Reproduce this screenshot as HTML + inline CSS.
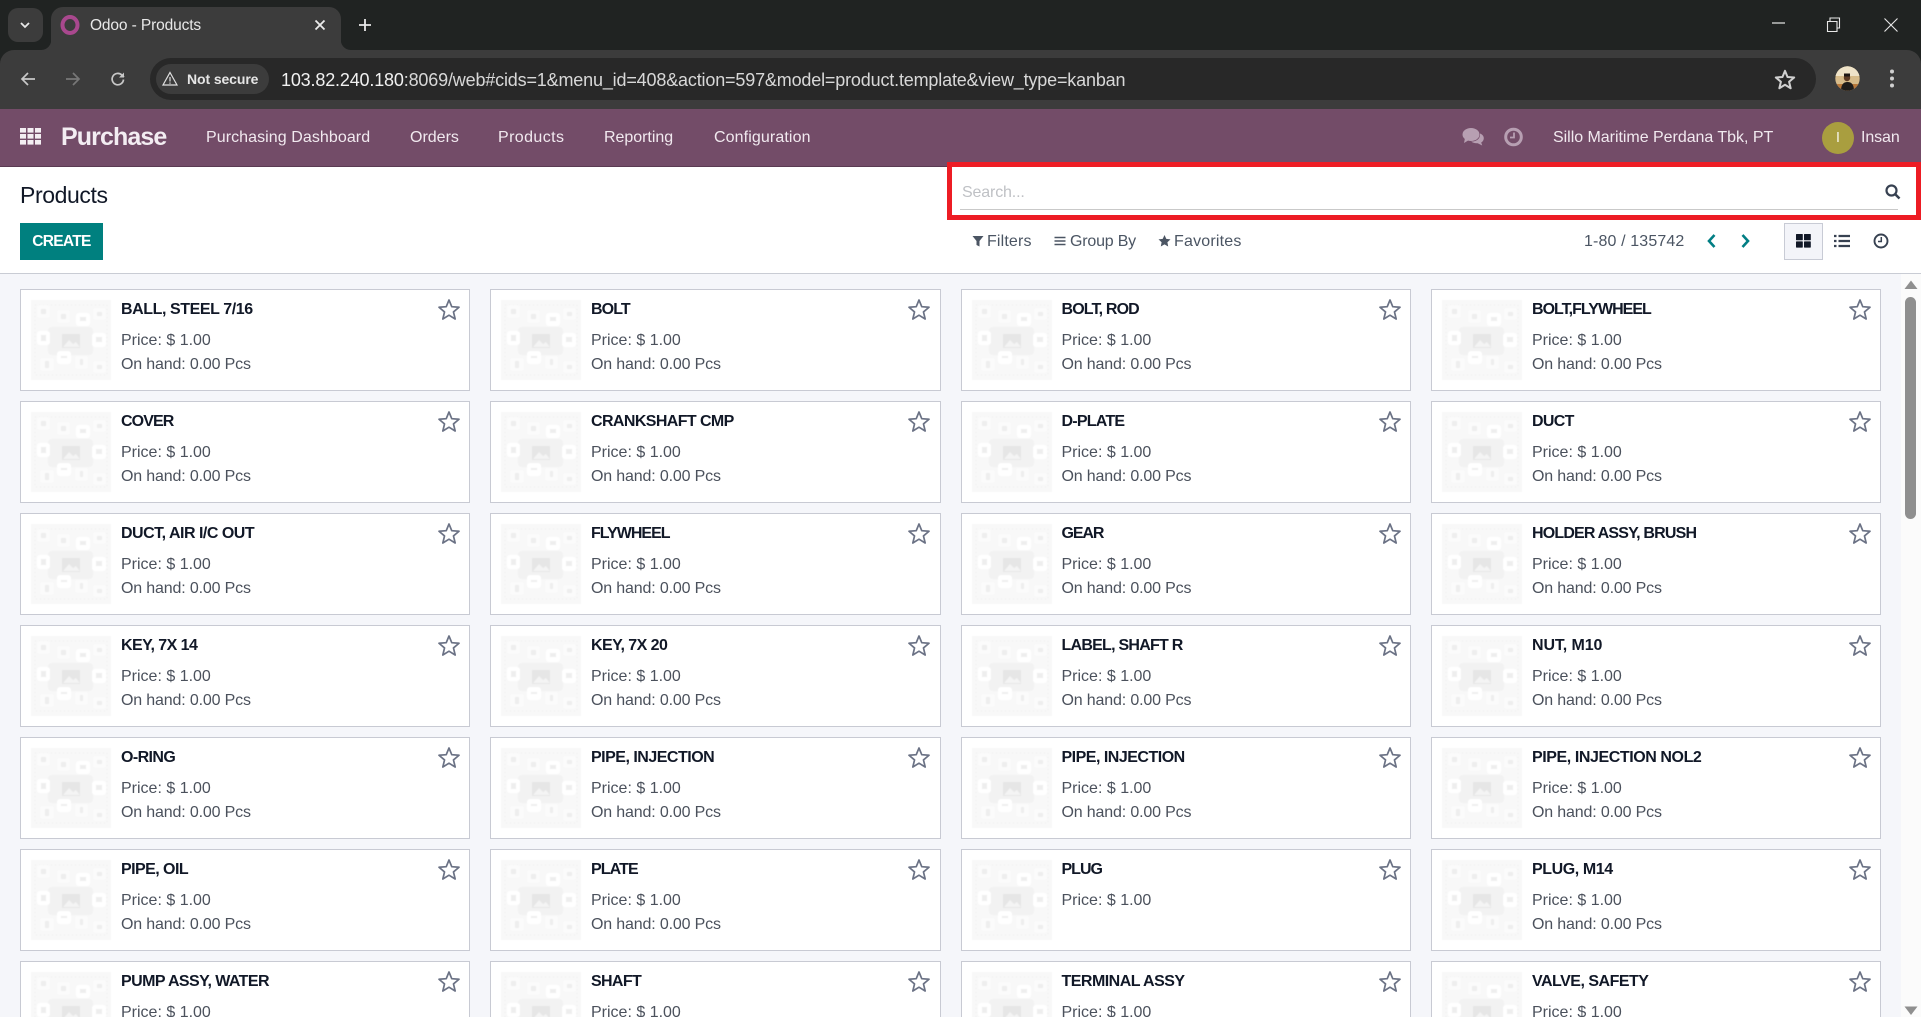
<!DOCTYPE html>
<html lang="en"><head><meta charset="utf-8"><title>Odoo - Products</title>
<style>
html,body{margin:0;padding:0;width:1921px;height:1017px;overflow:hidden;background:#fff}
body{position:relative;font-family:"Liberation Sans",sans-serif}
.a{position:absolute;white-space:nowrap}
svg{position:absolute;overflow:visible}
.nav{top:129px;font-size:16px;line-height:18px;color:#f1e9ef}
.ctl{top:233px;font-size:16px;line-height:18px;color:#4b5563}
#list{position:absolute;left:0;top:274px;width:1901px;height:743px;background:#f5f6fa;overflow:hidden}
.card{position:absolute;width:448px;height:100px;background:#fff;border:1px solid #c8cad3}
.c2{left:490px;width:449px}
.card .im{position:absolute;left:10px;top:10px;width:80px;height:80px;filter:blur(.5px)}
.card b{position:absolute;left:100px;top:11px;font-size:16px;line-height:18px;letter-spacing:-.42px;color:#111827;white-space:nowrap}
.card i{position:absolute;font-style:normal;left:100px;font-size:16px;line-height:18px;color:#4b515c;white-space:nowrap}
.card .p{top:42px;letter-spacing:0}
.card .h{top:66px;letter-spacing:-.16px}
.card .s{left:416px;top:8px;width:24px;height:24px}
</style></head><body>
<svg width="0" height="0" style="position:absolute">
<defs>
<symbol id="ph" viewBox="0 0 80 80">
<rect width="80" height="80" fill="#f8f8f8"/>
<rect x="4" y="5" width="72" height="70" fill="none" stroke="#eeeeee" stroke-dasharray="1 3"/>
<rect x="17" y="27" width="45" height="28" rx="4" fill="#f2f2f2"/>
<path d="M31 34h18v14H31z" fill="#e6e6e6"/><path d="M32 47l6-7 4 4 3-2 4 5z" fill="#f4f4f4"/>
<g fill="#fbfbfb"><rect x="6" y="5" width="13" height="13" rx="3"/><rect x="26" y="10" width="13" height="13" rx="3"/><rect x="45" y="13" width="14" height="13" rx="3" fill="#fff"/><rect x="62" y="8" width="13" height="12" rx="3"/><rect x="6" y="31" width="13" height="14" rx="3" fill="#fff"/><rect x="61" y="33" width="14" height="14" rx="3" fill="#fff"/><rect x="9" y="58" width="14" height="13" rx="3"/><rect x="26" y="51" width="14" height="13" rx="3" fill="#fff"/><rect x="44" y="56" width="13" height="13" rx="3"/><rect x="62" y="61" width="13" height="12" rx="3"/></g>
<g fill="#eeeeee"><rect x="10" y="9" width="5" height="5"/><rect x="30" y="14" width="5" height="5"/><rect x="49" y="17" width="6" height="4"/><rect x="66" y="12" width="5" height="4"/><rect x="10" y="35" width="5" height="6"/><rect x="65" y="37" width="6" height="5"/><rect x="14" y="61" width="4" height="7"/><rect x="30" y="56" width="6" height="2"/><rect x="49" y="59" width="3" height="6"/><rect x="66" y="65" width="5" height="4"/></g>
</symbol>
<symbol id="st" viewBox="0 0 24 24"><path d="M12 2l2.760 6.700 7.240.56-5.530 4.690 1.700 7.050L12 17.200 5.830 21l1.700-7.050L2 9.260l7.240-.56z" fill="none" stroke="#6b7285" stroke-width="1.700" stroke-linejoin="round"/></symbol>
<symbol id="stw" viewBox="0 0 24 24"><path d="M12 2l2.760 6.700 7.240.56-5.530 4.690 1.700 7.050L12 17.200 5.830 21l1.700-7.050L2 9.260l7.240-.56z" fill="none" stroke="#d0d0d0" stroke-width="2.200" stroke-linejoin="round"/></symbol>
</defs></svg>

<!-- browser chrome -->
<div class="a" style="left:0;top:0;width:1921px;height:66px;background:#202322"></div>
<div class="a" style="left:0;top:50px;width:1921px;height:59px;background:#3c3c3c;border-radius:14px 14px 0 0"></div>
<div class="a" style="left:8px;top:8px;width:35px;height:34px;background:#3c3c3c;border-radius:10px"></div>
<svg style="left:18px;top:19px" width="14" height="12"><path d="M3 4l4 4 4-4" fill="none" stroke="#e8e8e8" stroke-width="1.800"/></svg>
<div class="a" style="left:51px;top:7px;width:290px;height:43px;background:#3c3c3c;border-radius:12px 12px 0 0"></div>
<svg style="left:41px;top:38px" width="310" height="12"><path d="M10 0v12H0a10 10 0 0 0 10-12zM300 0v12h10a10 10 0 0 1-10-12z" fill="#3c3c3c"/></svg>
<svg style="left:60px;top:15px" width="20" height="20"><ellipse cx="10" cy="10" rx="7.500" ry="8" fill="none" stroke="#a9488e" stroke-width="4"/></svg>
<div class="a" style="left:90px;top:17px;font-size:15.500px;line-height:18px;color:#e8e8e8;letter-spacing:-.12px">Odoo - Products</div>
<svg style="left:313px;top:18px" width="14" height="14"><path d="M2.500 2.500l9 9m0-9l-9 9" stroke="#ececec" stroke-width="1.800"/></svg>
<svg style="left:358px;top:18px" width="14" height="14"><path d="M7 1v12M1 7h12" stroke="#e8e8e8" stroke-width="1.800"/></svg>
<svg style="left:1772px;top:18px" width="14" height="10"><path d="M0 5h13" stroke="#e8e8e8" stroke-width="1.200"/></svg>
<svg style="left:1827px;top:17px" width="14" height="15"><path d="M.5 4.500h9.500v10H.5zM3 4V1h9.500v10H10.500" fill="none" stroke="#e8e8e8" stroke-width="1.100"/></svg>
<svg style="left:1884px;top:18px" width="14" height="14"><path d="M.5.5l13 13m0-13l-13 13" stroke="#e8e8e8" stroke-width="1.100"/></svg>

<svg style="left:20px;top:71px" width="16" height="16"><path d="M15 8H2M8 2L2 8l6 6" fill="none" stroke="#c8c8c8" stroke-width="1.700"/></svg>
<svg style="left:65px;top:71px" width="16" height="16"><path d="M1 8h13M8 2l6 6-6 6" fill="none" stroke="#777" stroke-width="1.700"/></svg>
<svg style="left:110px;top:71px" width="16" height="16"><path d="M13.500 8.500A5.700 5.700 0 1 1 11.800 4L14 6" fill="none" stroke="#c8c8c8" stroke-width="1.700"/><path d="M14 1.500V6.500H9z" fill="#c8c8c8"/></svg>
<div class="a" style="left:150px;top:58px;width:1666px;height:42px;background:#282828;border-radius:21px"></div>
<div class="a" style="left:156px;top:64px;width:113px;height:30px;background:#3c3c3c;border-radius:15px"></div>
<svg style="left:162px;top:71px" width="16" height="16"><path d="M8 1.500L15 14H1zM8 6v4.500M8 11.500v1.300" fill="none" stroke="#e0e0e0" stroke-width="1.200"/></svg>
<div class="a" style="left:187px;top:71px;font-size:14px;line-height:16px;font-weight:bold;color:#e6e6e6;letter-spacing:-.1px">Not secure</div>
<div class="a" style="left:281px;top:70px;font-size:18px;line-height:20px;letter-spacing:-.17px;color:#d8d8d8"><span style="color:#f1f1f1">103.82.240.180</span>:8069/web#cids=1&amp;menu_id=408&amp;action=597&amp;model=product.template&amp;view_type=kanban</div>
<svg style="left:1774px;top:69px" width="22" height="22"><use href="#stw" width="22" height="22"/></svg>
<svg style="left:1835px;top:66px" width="25" height="25"><defs><clipPath id="cav"><circle cx="12.500" cy="12.500" r="12.200"/></clipPath></defs><g clip-path="url(#cav)"><rect width="25" height="25" fill="#d8bc8a"/><rect y="0" width="25" height="10" fill="#efe3c8"/><rect y="18" width="25" height="7" fill="#b8783a"/><path d="M6 25c0-7 3-9 6.500-9s6.500 2 6.500 9z" fill="#1e1c1a"/><circle cx="12" cy="12" r="3.200" fill="#5c3a24"/><rect x="9" y="7.500" width="6" height="3" fill="#1e1613"/></g></svg>
<svg style="left:1888px;top:68px" width="8" height="22"><circle cx="4" cy="3.500" r="2" fill="#d0d0d0"/><circle cx="4" cy="10.500" r="2" fill="#d0d0d0"/><circle cx="4" cy="17.500" r="2" fill="#d0d0d0"/></svg>

<!-- odoo navbar -->
<div class="a" style="left:0;top:109px;width:1921px;height:57px;background:#734c68;border-bottom:1px solid #5a3a52"></div>
<svg style="left:20px;top:128px" width="22" height="17"><g fill="#f3eef2"><rect width="6" height="4.600"/><rect x="7.500" width="6" height="4.600"/><rect x="15" width="6" height="4.600"/><rect y="6" width="6" height="4.600"/><rect x="7.500" y="6" width="6" height="4.600"/><rect x="15" y="6" width="6" height="4.600"/><rect y="12" width="6" height="4.600"/><rect x="7.500" y="12" width="6" height="4.600"/><rect x="15" y="12" width="6" height="4.600"/></g></svg>
<div class="a" style="left:61px;top:122px;font-size:25px;line-height:30px;font-weight:bold;color:#f3edf2;letter-spacing:-.9px">Purchase</div>
<div class="a nav" style="left:206px;letter-spacing:.07px">Purchasing Dashboard</div>
<div class="a nav" style="left:410px;letter-spacing:0">Orders</div>
<div class="a nav" style="left:498px;letter-spacing:.4px">Products</div>
<div class="a nav" style="left:604px;letter-spacing:-.03px">Reporting</div>
<div class="a nav" style="left:714px;letter-spacing:.11px">Configuration</div>
<svg style="left:1462px;top:127px" width="22" height="20" fill="#b79fb2"><ellipse cx="9" cy="7.500" rx="8.500" ry="6.500"/><path d="M3 11l-1 5 5-3z"/><path d="M18 6.500c2.500 1 3.800 2.800 3.800 4.700 0 1.800-1 3.300-2.600 4.300l1 3-4.500-2.300c-2.800.2-5-.4-6.500-1.700 5 .3 9.500-2.800 8.800-8z"/></svg>
<svg style="left:1504px;top:127px" width="20" height="20"><circle cx="9.500" cy="10" r="7.800" fill="none" stroke="#b79fb2" stroke-width="3"/><path d="M10 5.500v5H6" fill="none" stroke="#b79fb2" stroke-width="1.800"/></svg>
<div class="a nav" style="left:1553px;letter-spacing:-.03px">Sillo Maritime Perdana Tbk, PT</div>
<div class="a" style="left:1822px;top:122px;width:32px;height:32px;border-radius:50%;background:#a99e3f"></div>
<div class="a" style="left:1822px;top:129px;width:32px;text-align:center;font-size:15px;line-height:18px;color:#f4f2e2">I</div>
<div class="a nav" style="left:1861px;letter-spacing:-.1px">Insan</div>

<!-- control panel -->
<div class="a" style="left:20px;top:181px;font-size:23px;line-height:28px;color:#111827;letter-spacing:-.4px">Products</div>
<div class="a" style="left:20px;top:223px;width:83px;height:37px;line-height:37px;text-align:center;background:#00807f;color:#fff;font-size:15.500px;font-weight:bold;letter-spacing:-.7px">CREATE</div>

<div class="a" style="left:947px;top:162px;width:964px;height:48px;border:5px solid #ed1c24;background:#fff"></div>
<div class="a" style="left:962px;top:184px;font-size:16px;line-height:18px;color:#bfc1c5;letter-spacing:-.15px">Search...</div>
<div class="a" style="left:960px;top:209px;width:938px;height:1px;background:#c9c9c9"></div>
<svg style="left:1885px;top:184px" width="16" height="16"><circle cx="6.500" cy="6.500" r="5" fill="none" stroke="#374151" stroke-width="2.200"/><path d="M10 10l4.500 4.500" stroke="#374151" stroke-width="2.500"/></svg>

<svg style="left:972px;top:235px" width="12" height="12"><path d="M.5 1h11L7.500 6v5.500L4.500 10V6z" fill="#4b5563"/></svg>
<div class="a ctl" style="left:987px;letter-spacing:.15px">Filters</div>
<svg style="left:1054px;top:235px" width="12" height="12"><path d="M.5 2.500h11M.5 6h11M.5 9.500h11" stroke="#4b5563" stroke-width="1.400"/></svg>
<div class="a ctl" style="left:1070px;letter-spacing:-.2px">Group By</div>
<svg style="left:1158px;top:234px" width="14" height="14"><path d="M6.500 1l1.800 3.900 4.200.5-3.100 2.900.8 4.200-3.700-2.100-3.700 2.100.8-4.200L.5 5.400l4.200-.5z" fill="#4b5563"/></svg>
<div class="a ctl" style="left:1174px;letter-spacing:.2px">Favorites</div>
<div class="a ctl" style="left:1584px;letter-spacing:.13px">1-80 / 135742</div>
<svg style="left:1706px;top:233px" width="12" height="16"><path d="M8.500 2L3 8l5.500 6" fill="none" stroke="#017e84" stroke-width="2.600"/></svg>
<svg style="left:1739px;top:233px" width="12" height="16"><path d="M3.500 2L9 8l-5.500 6" fill="none" stroke="#017e84" stroke-width="2.600"/></svg>
<div class="a" style="left:1784px;top:223px;width:37px;height:35px;background:#f3f4f9;border:1px solid #c8cbd5"></div>
<svg style="left:1796px;top:234px" width="15" height="14"><g fill="#111827"><rect width="6.800" height="6.200" rx=".6"/><rect x="8" width="6.800" height="6.200" rx=".6"/><rect y="7.400" width="6.800" height="6.200" rx=".6"/><rect x="8" y="7.400" width="6.800" height="6.200" rx=".6"/></g></svg>
<svg style="left:1834px;top:234px" width="16" height="14"><path d="M0 2h2.500M4.500 2H16M0 7h2.500M4.500 7H16M0 12h2.500M4.500 12H16" stroke="#374151" stroke-width="2.200"/></svg>
<svg style="left:1873px;top:233px" width="16" height="16"><circle cx="8" cy="8" r="6.500" fill="none" stroke="#374151" stroke-width="1.900"/><path d="M8.300 4v4.500H5" fill="none" stroke="#374151" stroke-width="1.500"/></svg>
<div class="a" style="left:0;top:273px;width:1921px;height:1px;background:#c9ccd4"></div>

<!-- kanban -->
<div id="list">
<div class="card" style="left:20px;top:15px"><svg class="im"><use href="#ph" width="80" height="80"/></svg><b>BALL, STEEL 7/16</b><i class="p">Price: $ 1.00</i><i class="h">On hand: 0.00 Pcs</i><svg class="s"><use href="#st" width="24" height="24"/></svg></div>
<div class="card c2" style="top:15px"><svg class="im"><use href="#ph" width="80" height="80"/></svg><b style="letter-spacing:-.9px">BOLT</b><i class="p">Price: $ 1.00</i><i class="h">On hand: 0.00 Pcs</i><svg class="s"><use href="#st" width="24" height="24"/></svg></div>
<div class="card" style="left:960.500px;top:15px"><svg class="im"><use href="#ph" width="80" height="80"/></svg><b style="letter-spacing:-.85px">BOLT, ROD</b><i class="p">Price: $ 1.00</i><i class="h">On hand: 0.00 Pcs</i><svg class="s"><use href="#st" width="24" height="24"/></svg></div>
<div class="card" style="left:1431px;top:15px"><svg class="im"><use href="#ph" width="80" height="80"/></svg><b style="letter-spacing:-.98px">BOLT,FLYWHEEL</b><i class="p">Price: $ 1.00</i><i class="h">On hand: 0.00 Pcs</i><svg class="s"><use href="#st" width="24" height="24"/></svg></div>

<div class="card" style="left:20px;top:127px"><svg class="im"><use href="#ph" width="80" height="80"/></svg><b style="letter-spacing:-.9px">COVER</b><i class="p">Price: $ 1.00</i><i class="h">On hand: 0.00 Pcs</i><svg class="s"><use href="#st" width="24" height="24"/></svg></div>
<div class="card c2" style="top:127px"><svg class="im"><use href="#ph" width="80" height="80"/></svg><b style="letter-spacing:-.6px">CRANKSHAFT CMP</b><i class="p">Price: $ 1.00</i><i class="h">On hand: 0.00 Pcs</i><svg class="s"><use href="#st" width="24" height="24"/></svg></div>
<div class="card" style="left:960.500px;top:127px"><svg class="im"><use href="#ph" width="80" height="80"/></svg><b style="letter-spacing:-.77px">D-PLATE</b><i class="p">Price: $ 1.00</i><i class="h">On hand: 0.00 Pcs</i><svg class="s"><use href="#st" width="24" height="24"/></svg></div>
<div class="card" style="left:1431px;top:127px"><svg class="im"><use href="#ph" width="80" height="80"/></svg><b style="letter-spacing:-.7px">DUCT</b><i class="p">Price: $ 1.00</i><i class="h">On hand: 0.00 Pcs</i><svg class="s"><use href="#st" width="24" height="24"/></svg></div>

<div class="card" style="left:20px;top:239px"><svg class="im"><use href="#ph" width="80" height="80"/></svg><b style="letter-spacing:-.5px">DUCT, AIR I/C OUT</b><i class="p">Price: $ 1.00</i><i class="h">On hand: 0.00 Pcs</i><svg class="s"><use href="#st" width="24" height="24"/></svg></div>
<div class="card c2" style="top:239px"><svg class="im"><use href="#ph" width="80" height="80"/></svg><b style="letter-spacing:-1px">FLYWHEEL</b><i class="p">Price: $ 1.00</i><i class="h">On hand: 0.00 Pcs</i><svg class="s"><use href="#st" width="24" height="24"/></svg></div>
<div class="card" style="left:960.500px;top:239px"><svg class="im"><use href="#ph" width="80" height="80"/></svg><b style="letter-spacing:-1.1px">GEAR</b><i class="p">Price: $ 1.00</i><i class="h">On hand: 0.00 Pcs</i><svg class="s"><use href="#st" width="24" height="24"/></svg></div>
<div class="card" style="left:1431px;top:239px"><svg class="im"><use href="#ph" width="80" height="80"/></svg><b style="letter-spacing:-.82px">HOLDER ASSY, BRUSH</b><i class="p">Price: $ 1.00</i><i class="h">On hand: 0.00 Pcs</i><svg class="s"><use href="#st" width="24" height="24"/></svg></div>

<div class="card" style="left:20px;top:351px"><svg class="im"><use href="#ph" width="80" height="80"/></svg><b style="letter-spacing:-.55px">KEY, 7X 14</b><i class="p">Price: $ 1.00</i><i class="h">On hand: 0.00 Pcs</i><svg class="s"><use href="#st" width="24" height="24"/></svg></div>
<div class="card c2" style="top:351px"><svg class="im"><use href="#ph" width="80" height="80"/></svg><b style="letter-spacing:-.55px">KEY, 7X 20</b><i class="p">Price: $ 1.00</i><i class="h">On hand: 0.00 Pcs</i><svg class="s"><use href="#st" width="24" height="24"/></svg></div>
<div class="card" style="left:960.500px;top:351px"><svg class="im"><use href="#ph" width="80" height="80"/></svg><b style="letter-spacing:-.75px">LABEL, SHAFT R</b><i class="p">Price: $ 1.00</i><i class="h">On hand: 0.00 Pcs</i><svg class="s"><use href="#st" width="24" height="24"/></svg></div>
<div class="card" style="left:1431px;top:351px"><svg class="im"><use href="#ph" width="80" height="80"/></svg><b style="letter-spacing:-.1px">NUT, M10</b><i class="p">Price: $ 1.00</i><i class="h">On hand: 0.00 Pcs</i><svg class="s"><use href="#st" width="24" height="24"/></svg></div>

<div class="card" style="left:20px;top:463px"><svg class="im"><use href="#ph" width="80" height="80"/></svg><b style="letter-spacing:-.6px">O-RING</b><i class="p">Price: $ 1.00</i><i class="h">On hand: 0.00 Pcs</i><svg class="s"><use href="#st" width="24" height="24"/></svg></div>
<div class="card c2" style="top:463px"><svg class="im"><use href="#ph" width="80" height="80"/></svg><b style="letter-spacing:-.5px">PIPE, INJECTION</b><i class="p">Price: $ 1.00</i><i class="h">On hand: 0.00 Pcs</i><svg class="s"><use href="#st" width="24" height="24"/></svg></div>
<div class="card" style="left:960.500px;top:463px"><svg class="im"><use href="#ph" width="80" height="80"/></svg><b style="letter-spacing:-.5px">PIPE, INJECTION</b><i class="p">Price: $ 1.00</i><i class="h">On hand: 0.00 Pcs</i><svg class="s"><use href="#st" width="24" height="24"/></svg></div>
<div class="card" style="left:1431px;top:463px"><svg class="im"><use href="#ph" width="80" height="80"/></svg><b>PIPE, INJECTION NOL2</b><i class="p">Price: $ 1.00</i><i class="h">On hand: 0.00 Pcs</i><svg class="s"><use href="#st" width="24" height="24"/></svg></div>

<div class="card" style="left:20px;top:575px"><svg class="im"><use href="#ph" width="80" height="80"/></svg><b style="letter-spacing:-.55px">PIPE, OIL</b><i class="p">Price: $ 1.00</i><i class="h">On hand: 0.00 Pcs</i><svg class="s"><use href="#st" width="24" height="24"/></svg></div>
<div class="card c2" style="top:575px"><svg class="im"><use href="#ph" width="80" height="80"/></svg><b style="letter-spacing:-.9px">PLATE</b><i class="p">Price: $ 1.00</i><i class="h">On hand: 0.00 Pcs</i><svg class="s"><use href="#st" width="24" height="24"/></svg></div>
<div class="card" style="left:960.500px;top:575px"><svg class="im"><use href="#ph" width="80" height="80"/></svg><b style="letter-spacing:-1px">PLUG</b><i class="p">Price: $ 1.00</i><svg class="s"><use href="#st" width="24" height="24"/></svg></div>
<div class="card" style="left:1431px;top:575px"><svg class="im"><use href="#ph" width="80" height="80"/></svg><b>PLUG, M14</b><i class="p">Price: $ 1.00</i><i class="h">On hand: 0.00 Pcs</i><svg class="s"><use href="#st" width="24" height="24"/></svg></div>

<div class="card" style="left:20px;top:687px"><svg class="im"><use href="#ph" width="80" height="80"/></svg><b style="letter-spacing:-.57px">PUMP ASSY, WATER</b><i class="p">Price: $ 1.00</i><svg class="s"><use href="#st" width="24" height="24"/></svg></div>
<div class="card c2" style="top:687px"><svg class="im"><use href="#ph" width="80" height="80"/></svg><b style="letter-spacing:-.65px">SHAFT</b><i class="p">Price: $ 1.00</i><svg class="s"><use href="#st" width="24" height="24"/></svg></div>
<div class="card" style="left:960.500px;top:687px"><svg class="im"><use href="#ph" width="80" height="80"/></svg><b style="letter-spacing:-.52px">TERMINAL ASSY</b><i class="p">Price: $ 1.00</i><svg class="s"><use href="#st" width="24" height="24"/></svg></div>
<div class="card" style="left:1431px;top:687px"><svg class="im"><use href="#ph" width="80" height="80"/></svg><b style="letter-spacing:-.5px">VALVE, SAFETY</b><i class="p">Price: $ 1.00</i><svg class="s"><use href="#st" width="24" height="24"/></svg></div>
</div>

<!-- scrollbar -->
<div class="a" style="left:1901px;top:274px;width:20px;height:743px;background:#fbfbfb"></div>
<svg style="left:1904px;top:280px" width="14" height="10"><path d="M7 .5L13.500 9H.5z" fill="#8f8f8f"/></svg>
<div class="a" style="left:1905px;top:297px;width:11px;height:222px;border-radius:6px;background:#8f8f8f"></div>
<svg style="left:1904px;top:1006px" width="14" height="10"><path d="M.5 .5h13L7 9z" fill="#8f8f8f"/></svg>
</body></html>
